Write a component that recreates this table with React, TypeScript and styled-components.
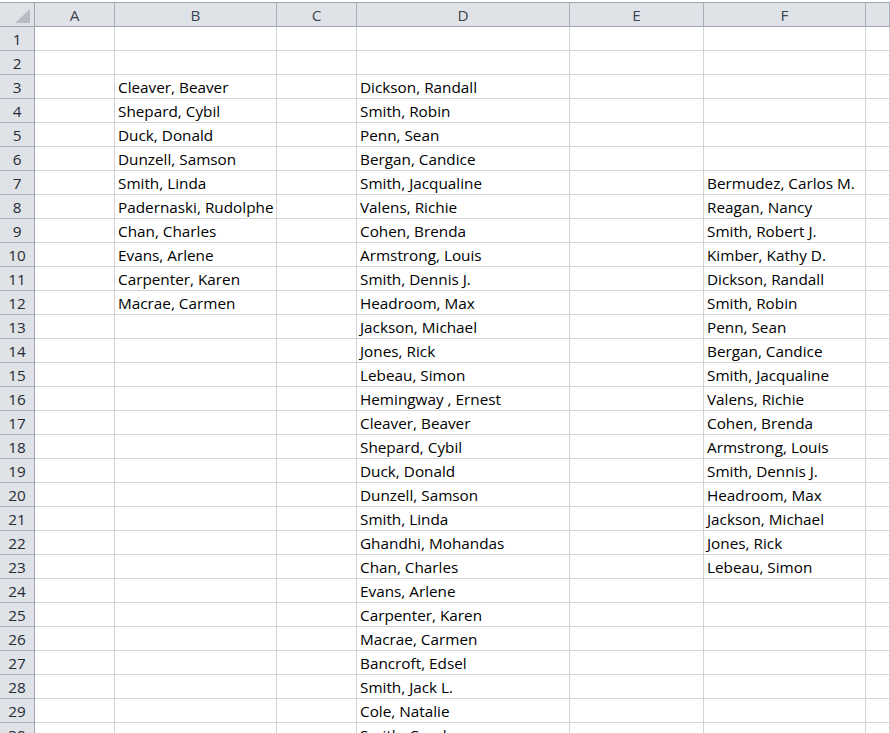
import React from "react";
import styled, { createGlobalStyle } from "styled-components";

const Global = createGlobalStyle`
  html, body { margin: 0; padding: 0; background: #ffffff; }
  body { overflow: hidden; width: 890px; height: 733px; }
`;

const FONT = `"Open Sans", "Noto Sans", "Liberation Sans", sans-serif`;

const Sheet = styled.div`
  margin-top: 2px;
  display: grid;
  grid-template-columns: 35px 80px 162px 80px 213px 134px 162px 1fr;
  grid-auto-rows: 24px;
  border-top: 1px solid #9fa5ad;
  font-family: ${FONT};
  font-size: 15.3px;
  width: 890px;
`;

const Corner = styled.div`
  box-sizing: border-box;
  background: #dfe3e8;
  border-right: 1px solid #9fa5ad;
  border-bottom: 1px solid #9fa5ad;
  display: flex;
  justify-content: flex-end;
  align-items: flex-end;
  padding: 0 4px 3px 0;
`;

const Triangle = styled.div`
  width: 0;
  height: 0;
  border-left: 15px solid transparent;
  border-bottom: 14px solid #b7bcc3;
`;

const ColHead = styled.div`
  box-sizing: border-box;
  background: #dfe3e8;
  border-right: 1px solid #a9afb6;
  border-bottom: 1px solid #9fa5ad;
  display: flex;
  align-items: center;
  justify-content: center;
  color: #3c4450;
`;

const RowHead = styled.div`
  box-sizing: border-box;
  background: #dfe3e8;
  border-right: 1px solid #9fa5ad;
  border-bottom: 1px solid #a9afb6;
  display: flex;
  align-items: center;
  justify-content: center;
  color: #262b33;
  padding-top: 1px;
`;

const Cell = styled.div`
  box-sizing: border-box;
  border-right: 1px solid #d4d4d4;
  border-bottom: 1px solid #d4d4d4;
  display: flex;
  align-items: center;
  padding: 1px 0 0 3px;
  white-space: nowrap;
  overflow: visible;
  color: #000;
  position: relative;
  z-index: 1;
`;

const colB: Record<number, string> = {
  3: "Cleaver, Beaver",
  4: "Shepard, Cybil",
  5: "Duck, Donald",
  6: "Dunzell, Samson",
  7: "Smith, Linda",
  8: "Padernaski, Rudolphe",
  9: "Chan, Charles",
  10: "Evans, Arlene",
  11: "Carpenter, Karen",
  12: "Macrae, Carmen",
};

const colDList = [
  "Dickson, Randall",
  "Smith, Robin",
  "Penn, Sean",
  "Bergan, Candice",
  "Smith, Jacqualine",
  "Valens, Richie",
  "Cohen, Brenda",
  "Armstrong, Louis",
  "Smith, Dennis J.",
  "Headroom, Max",
  "Jackson, Michael",
  "Jones, Rick",
  "Lebeau, Simon",
  "Hemingway , Ernest",
  "Cleaver, Beaver",
  "Shepard, Cybil",
  "Duck, Donald",
  "Dunzell, Samson",
  "Smith, Linda",
  "Ghandhi, Mohandas",
  "Chan, Charles",
  "Evans, Arlene",
  "Carpenter, Karen",
  "Macrae, Carmen",
  "Bancroft, Edsel",
  "Smith, Jack L.",
  "Cole, Natalie",
  "Smith, Carol",
];

const colFList = [
  "Bermudez, Carlos M.",
  "Reagan, Nancy",
  "Smith, Robert J.",
  "Kimber, Kathy D.",
  "Dickson, Randall",
  "Smith, Robin",
  "Penn, Sean",
  "Bergan, Candice",
  "Smith, Jacqualine",
  "Valens, Richie",
  "Cohen, Brenda",
  "Armstrong, Louis",
  "Smith, Dennis J.",
  "Headroom, Max",
  "Jackson, Michael",
  "Jones, Rick",
  "Lebeau, Simon",
];

const letters = ["A", "B", "C", "D", "E", "F", ""];

function valueAt(row: number, col: string): string {
  if (col === "B") return colB[row] ?? "";
  if (col === "D") return row >= 3 ? colDList[row - 3] ?? "" : "";
  if (col === "F") return row >= 7 ? colFList[row - 7] ?? "" : "";
  return "";
}

export default function App() {
  const rows = Array.from({ length: 30 }, (_, i) => i + 1);
  return (
    <>
      <Global />
      <Sheet>
        <Corner>
          <Triangle />
        </Corner>
        {letters.map((l, i) => (
          <ColHead key={i}>{l}</ColHead>
        ))}
        {rows.map((r) => (
          <React.Fragment key={r}>
            <RowHead>{r}</RowHead>
            {letters.map((l, i) => (
              <Cell key={i}>{valueAt(r, l)}</Cell>
            ))}
          </React.Fragment>
        ))}
      </Sheet>
    </>
  );
}
